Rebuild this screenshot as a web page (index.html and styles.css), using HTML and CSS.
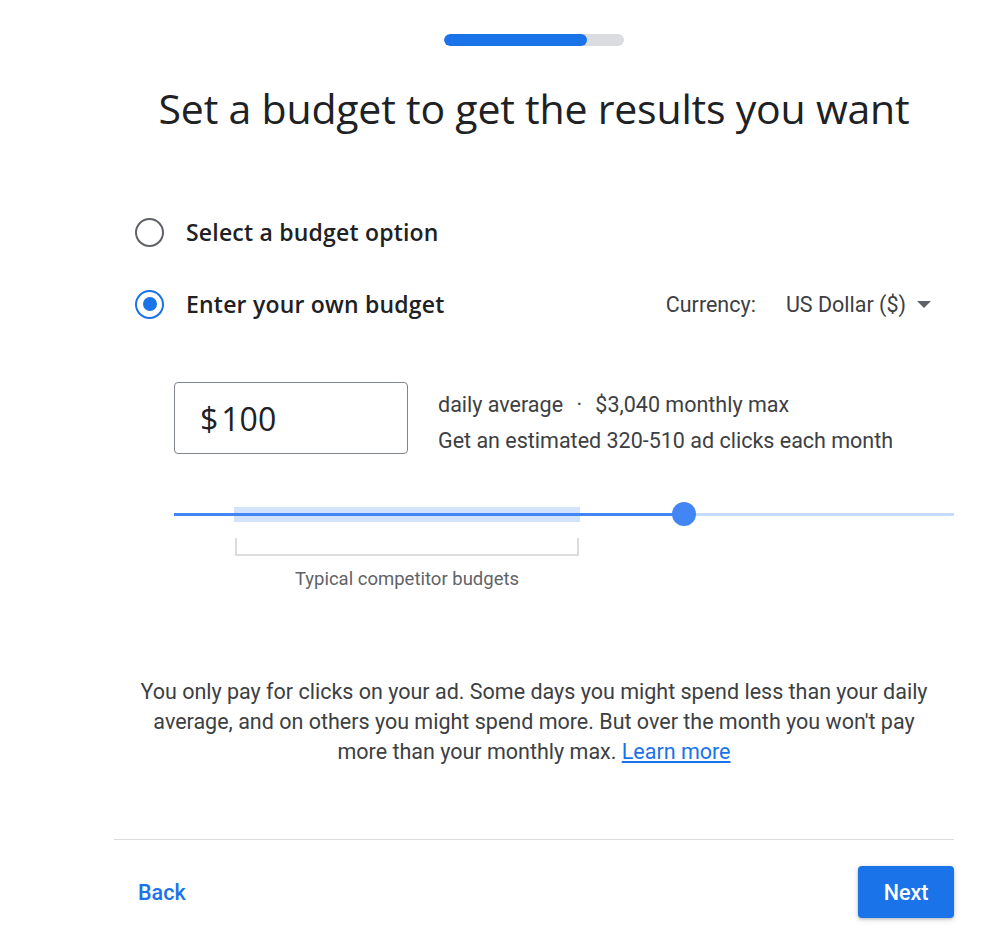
FILE: index.html
```html
<html>
<head>
  <link rel="stylesheet" href="styles.css">
</head>
<body>
<div class="page">
  <div class="progress"><div class="progress-fill"></div></div>
  <h1 class="title">Set a budget to get the results you want</h1>

  <div class="options">
    <label class="option">
      <span class="radio"></span>
      <span class="option-label">Select a budget option</span>
    </label>
    <div class="option-row">
      <label class="option">
        <span class="radio checked"></span>
        <span class="option-label">Enter your own budget</span>
      </label>
      <div class="currency">
        <span class="currency-label">Currency:</span>
        <span class="currency-value">US Dollar ($)</span>
        <span class="caret"></span>
      </div>
    </div>
  </div>

  <div class="budget">
    <div class="budget-input"><span class="dollar">$</span>100</div>
    <div class="budget-info">
      <p>daily average <span class="dot">&middot;</span> $3,040 monthly max</p>
      <p>Get an estimated 320-510 ad clicks each month</p>
    </div>
  </div>

  <div class="slider">
    <div class="slider-track">
      <div class="competitor-band"></div>
      <div class="slider-active"></div>
      <div class="slider-thumb"></div>
    </div>
    <div class="bracket"></div>
    <div class="bracket-label">Typical competitor budgets</div>
  </div>

  <p class="note">You only pay for clicks on your ad. Some days you might spend less than your daily average, and on others you might spend more. But over the month you won't pay more than your monthly max. <a href="#">Learn more</a></p>

  <div class="footer">
    <a href="#" class="back">Back</a>
    <a href="#" class="next">Next</a>
  </div>
</div>
</body>
</html>
```

FILE: styles.css
```css
body {
  margin: 0;
  padding: 0;
  font-family: Roboto, "Liberation Sans", sans-serif;
  color: #3c4043;
  background: #fff;
}

.page {
  width: 840px;
  margin-left: 114px;
  padding-top: 34px;
}

.progress {
  width: 180px;
  height: 12px;
  margin: 0 auto;
  background: #dadce0;
  border-radius: 6px;
  overflow: hidden;
}

.progress-fill {
  width: 143px;
  height: 100%;
  background: #1a73e8;
  border-radius: 6px;
}

.title {
  margin: 38px 0 0;
  text-align: center;
  font-family: "Open Sans", sans-serif;
  font-weight: 400;
  font-size: 41px;
  line-height: 48px;
  color: #202124;
  letter-spacing: -0.2px;
}

.options {
  margin-top: 80px;
  padding-left: 21px;
}

.option {
  display: flex;
  align-items: center;
  height: 40px;
}

.option-row {
  display: flex;
  align-items: center;
  justify-content: space-between;
  margin-top: 32px;
}

.radio {
  box-sizing: border-box;
  width: 29px;
  height: 29px;
  border: 2.5px solid #5f6368;
  border-radius: 50%;
  display: flex;
  align-items: center;
  justify-content: center;
}

.radio.checked {
  border-color: #1a73e8;
}

.radio.checked::after {
  content: "";
  width: 14px;
  height: 14px;
  border-radius: 50%;
  background: #1a73e8;
}

.option-label {
  margin-left: 22px;
  font-family: "Open Sans", sans-serif;
  font-size: 23px;
  font-weight: 600;
  letter-spacing: 0.2px;
  color: #202124;
}

.currency {
  display: flex;
  align-items: center;
  font-size: 21.5px;
  color: #3c4043;
  margin-right: 23px;
}

.currency-value {
  margin-left: 30px;
}

.caret {
  width: 0;
  height: 0;
  margin-left: 11px;
  border-left: 7px solid transparent;
  border-right: 7px solid transparent;
  border-top: 7px solid #5f6368;
}

.budget {
  display: flex;
  margin-top: 58px;
  padding-left: 60px;
}

.budget-input {
  box-sizing: border-box;
  width: 234px;
  height: 72px;
  border: 1px solid #80868b;
  border-radius: 4px;
  padding-left: 25px;
  display: flex;
  align-items: center;
  font-family: "Open Sans", sans-serif;
  font-size: 32px;
  color: #202124;
}

.dollar {
  margin-right: 3px;
}

.budget-info {
  margin-left: 30px;
  padding-top: 5px;
  font-size: 21.5px;
}

.budget-info p {
  margin: 0;
  line-height: 36px;
}

.dot {
  margin: 0 8px;
}

.slider {
  margin-top: 43px;
  padding-left: 60px;
}

.slider-track {
  position: relative;
  height: 24px;
}

.slider-track::before {
  content: "";
  position: absolute;
  left: 0;
  right: 0;
  top: 11px;
  height: 3px;
  background: #c6dafc;
}

.competitor-band {
  position: absolute;
  left: 60px;
  width: 346px;
  top: 5px;
  height: 15px;
  background: #d2e3fc;
}

.slider-active {
  position: absolute;
  left: 0;
  width: 510px;
  top: 11px;
  height: 3px;
  background: #4285f4;
}

.slider-thumb {
  position: absolute;
  left: 498px;
  top: 0;
  width: 24px;
  height: 24px;
  border-radius: 50%;
  background: #4285f4;
}

.bracket {
  box-sizing: border-box;
  margin-left: 61px;
  margin-top: 12px;
  width: 344px;
  height: 18px;
  border: 2px solid #dadce0;
  border-top: none;
}

.bracket-label {
  width: 466px;
  text-align: center;
  margin-top: 12px;
  font-size: 18.5px;
  line-height: 22px;
  color: #5f6368;
}

.note {
  margin: 87px 0 0;
  text-align: center;
  font-size: 21.5px;
  line-height: 30px;
  color: #3c4043;
  padding: 0 18px;
}

.note a {
  color: #1a73e8;
}

.footer {
  margin-top: 72px;
  border-top: 1px solid #dadce0;
  display: flex;
  justify-content: space-between;
  align-items: center;
  padding-top: 26px;
}

.back {
  margin-left: 24px;
  font-size: 21.5px;
  font-weight: 500;
  color: #1a73e8;
  text-decoration: none;
}

.next {
  width: 96px;
  height: 52px;
  background: #1a73e8;
  color: #fff;
  border-radius: 4px;
  font-size: 21.5px;
  font-weight: 500;
  text-decoration: none;
  display: flex;
  align-items: center;
  justify-content: center;
  box-shadow: 0 1px 3px rgba(60,64,67,0.3), 0 2px 6px rgba(60,64,67,0.15);
}
```
